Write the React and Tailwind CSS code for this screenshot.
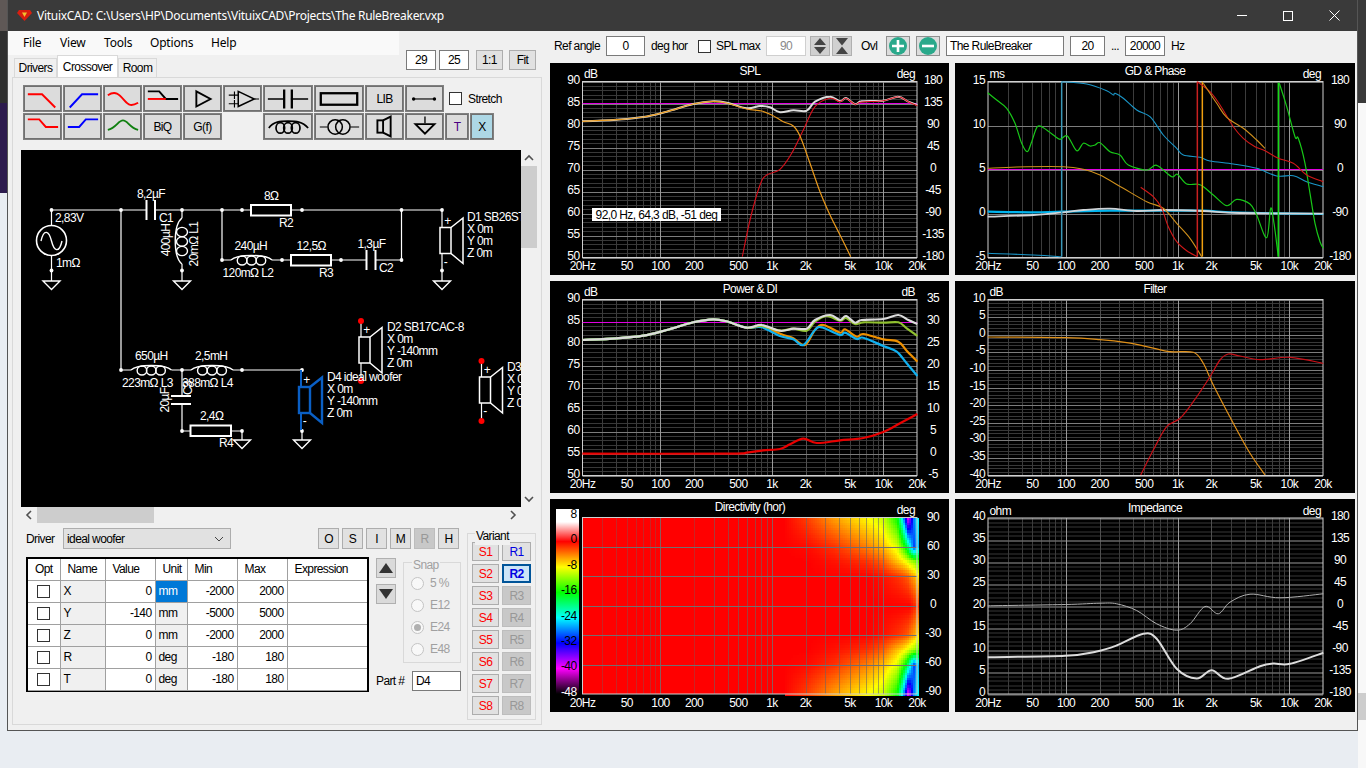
import React, { useMemo } from "react";

const FREQ_LABELS = [
  ["20Hz", 20], ["50", 50], ["100", 100], ["200", 200], ["500", 500],
  ["1k", 1000], ["2k", 2000], ["5k", 5000], ["10k", 10000], ["20k", 20000],
];
const MINOR_FREQS = [
  30, 40, 50, 60, 70, 80, 90, 200, 300, 400, 500, 600, 700, 800, 900,
  2000, 3000, 4000, 5000, 6000, 7000, 8000, 9000,
];
const MAJOR_FREQS = [100, 1000, 10000];

// zoom-space points -> smooth path (catmull-rom)
const toPath = (pts, dx, dy) => {
  const p = pts.map(([x, y]) => [x / 3 + dx, y / 3 + dy]);
  let d = `M${p[0][0].toFixed(1)} ${p[0][1].toFixed(1)}`;
  for (let i = 0; i < p.length - 1; i++) {
    const a = p[i - 1] || p[i];
    const b = p[i];
    const c = p[i + 1];
    const e = p[i + 2] || c;
    const c1x = b[0] + (c[0] - a[0]) / 6;
    const c1y = b[1] + (c[1] - a[1]) / 6;
    const c2x = c[0] - (e[0] - b[0]) / 6;
    const c2y = c[1] - (e[1] - b[1]) / 6;
    d += `C${c1x.toFixed(1)} ${c1y.toFixed(1)} ${c2x.toFixed(1)} ${c2y.toFixed(1)} ${c[0].toFixed(1)} ${c[1].toFixed(1)}`;
  }
  return d;
};

const range = (from, step, n) => Array.from({ length: n }, (_, i) => from + i * step);

const ChartAxes = ({ x0, x1, y0, y1, title, leftUnit, rightUnit, left, right, rightX, xLabelY }) => {
  const fx = (f) => x0 + ((x1 - x0) * Math.log10(f / 20)) / 3;
  return (
    <g fill="#fff" fontSize="12">
      <text x="200" y="8" textAnchor="middle" dominantBaseline="central">{title}</text>
      {leftUnit && <text x={x0 + 1.5} y="11" dominantBaseline="central">{leftUnit}</text>}
      {rightUnit && <text x={x1 - 2} y="11" textAnchor="end" dominantBaseline="central">{rightUnit}</text>}
      {left.map((v, i) => (
        <text key={v} x={x0 - 3} y={y0 + (i * (y1 - y0)) / (left.length - 1) - 2} textAnchor="end" dominantBaseline="central">{v}</text>
      ))}
      {right.map((v, i) => (
        <text key={v} x={rightX} y={y0 + (i * (y1 - y0)) / (right.length - 1) - 2} textAnchor="middle" dominantBaseline="central">{v}</text>
      ))}
      {FREQ_LABELS.map(([label, f]) => (
        <text key={label} x={fx(f)} y={xLabelY} textAnchor="middle" dominantBaseline="central">{label}</text>
      ))}
    </g>
  );
};

const Chart = ({ col, row, title, leftUnit, rightUnit, left, right = [], minor = 5, curves, children }) => {
  const x0 = col === 0 ? 32.5 : 33;
  const x1 = col === 0 ? 367 : 368;
  const y0 = 18.5;
  const y1 = 194.5;
  const dx = col === 0 ? 0 : -5;
  const dy = [-3, -1, -4][row];
  const fx = (f) => x0 + ((x1 - x0) * Math.log10(f / 20)) / 3;
  const divs = (left.length - 1) * minor;
  return (
    <div className="relative bg-black">
      <svg className="block h-full w-full" viewBox={`0 0 ${col === 0 ? 399 : 400} 212`}>
        {minor > 0 && range(1, 1, divs - 1).map((i) => {
          const y = Math.round(y0 + (i * (y1 - y0)) / divs) + 0.5;
          return <line key={i} x1={x0} x2={x1} y1={y} y2={y} stroke="#383838" />;
        })}
        {MINOR_FREQS.concat(MINOR_FREQS.map((f) => f * 10)).filter((f) => f < 20000).map((f, i) => (
          <line key={i} x1={Math.round(fx(f)) + 0.5} x2={Math.round(fx(f)) + 0.5} y1={y0} y2={y1} stroke={f === 200 || f === 2000 ? "#505050" : "#3c3c3c"} />
        ))}
        {left.map((v, i) => {
          const y = Math.round(y0 + (i * (y1 - y0)) / (left.length - 1)) + 0.5;
          return <line key={v} x1={x0} x2={x1} y1={y} y2={y} stroke="#7c7c7c" />;
        })}
        {MAJOR_FREQS.map((f) => (
          <line key={f} x1={Math.round(fx(f)) + 0.5} x2={Math.round(fx(f)) + 0.5} y1={y0} y2={y1} stroke="#999" />
        ))}
        <rect x={x0} y={y0} width={x1 - x0} height={y1 - y0} fill="none" stroke="#d0d0d0" />
        {curves.map((c, i) => {
          if (c.h) {
            const y = Math.round(c.h / 3 + dy) + 0.5;
            return <line key={i} x1={x0} x2={x1} y1={y} y2={y} stroke={c.color} />;
          }
          if (c.line) {
            return <line key={i} x1={c.line[0] / 3 + dx} x2={c.line[0] / 3 + dx} y1={c.line[1] / 3 + dy} y2={c.line[2] / 3 + dy} stroke={c.color} strokeWidth={c.w} />;
          }
          return <path key={i} d={toPath(c.pts, dx, dy)} fill="none" stroke={c.color} strokeWidth={c.w} strokeLinejoin="round" />;
        })}
        <ChartAxes x0={x0} x1={x1} y0={y0} y1={y1} title={title} leftUnit={leftUnit} rightUnit={rightUnit} left={left} right={right} rightX={col === 0 ? 383 : 385} xLabelY="203" />
      </svg>
      {children}
    </div>
  );
};

// colour scale of the directivity map
const SCALE = [
  [8, [255, 255, 255]], [0, [255, 0, 0]], [-8, [255, 255, 0]], [-16, [0, 255, 0]],
  [-24, [0, 255, 255]], [-32, [0, 0, 255]], [-40, [255, 0, 255]], [-48, [0, 0, 0]],
];
const dbColor = (db) => {
  for (let i = 0; i < SCALE.length - 1; i++) {
    const [a, ca] = SCALE[i];
    const [b, cb] = SCALE[i + 1];
    if (db <= a && db >= b) {
      const t = (a - db) / (a - b);
      return `rgb(${ca.map((v, k) => Math.round(v + (cb[k] - v) * t)).join(",")})`;
    }
  }
  return "#000";
};
const HEAT_X = [97, 700, 770, 850, 950, 1000, 1040, 1055, 1065, 1073, 1080, 1090, 1102];
const HEAT_T = [0, 0.33, 0.5, 0.667, 1];
const HEAT = [
  [0, 0, 0, 0, 0, 0, 0, 0, 0, 0, 0, 1, 2],
  [0, 0, 0, 0, 0, 0.5, 1.5, 2, 2.5, 3, 4, 5, 7],
  [0, 0, 0, 0.5, 1.5, 3, 6, 7, 8, 9, 10, 11, 13],
  [0, 0, 0.3, 1.5, 4, 6, 9, 13, 16, 20, 24, 30, 26],
  [0, 0, 2, 5, 8, 10, 16, 24, 32, 40, 36, 28, 24],
];
const lerpIndex = (arr, v) => {
  let i = 0;
  while (i < arr.length - 2 && v > arr[i + 1]) i++;
  return [i, Math.min(1, (v - arr[i]) / (arr[i + 1] - arr[i]))];
};
const heatDb = (zx, t) => {
  const [ix, fx] = lerpIndex(HEAT_X, zx);
  const [it, ft] = lerpIndex(HEAT_T, t);
  const a = HEAT[it][ix] + (HEAT[it][ix + 1] - HEAT[it][ix]) * fx;
  const b = HEAT[it + 1][ix] + (HEAT[it + 1][ix + 1] - HEAT[it + 1][ix]) * fx;
  return -(a + (b - a) * ft);
};

const Directivity = () => {
  const x0 = 32.5;
  const x1 = 367;
  const y0 = 18.5;
  const y1 = 195;
  const fx = (f) => x0 + ((x1 - x0) * Math.log10(f / 20)) / 3;
  const cells = useMemo(() => {
    const out = [];
    for (let x = x0; x < x1; x += 2) {
      const zx = (x + 1) * 3;
      const flat = zx < 640;
      for (let y = y0; y < y1; y += 2.5) {
        if (flat) continue;
        const t = Math.abs((y + 1.25 - (y0 + y1) / 2) / ((y1 - y0) / 2));
        const db = heatDb(zx, t);
        if (db < -0.05) out.push({ x, y, c: dbColor(db) });
      }
    }
    return out;
  }, []);
  const labels = [[8, 57], [0, 133], [-8, 210], [-16, 285], [-24, 362], [-32, 437], [-40, 513], [-48, 590]];
  return (
    <div className="bg-black">
      <svg className="block h-full w-full" viewBox="0 0 399 213">
        <defs>
          <linearGradient id="dbBar" x1="0" x2="0" y1="10" y2="195" gradientUnits="userSpaceOnUse">
            <stop offset="0.07" stopColor="#fff" />
            <stop offset="0.176" stopColor="#f00" />
            <stop offset="0.314" stopColor="#ff0" />
            <stop offset="0.451" stopColor="#0f0" />
            <stop offset="0.588" stopColor="#0ff" />
            <stop offset="0.725" stopColor="#00f" />
            <stop offset="0.862" stopColor="#f0f" />
            <stop offset="1" stopColor="#000" />
          </linearGradient>
        </defs>
        <rect x="6" y="10" width="23" height="185" fill="url(#dbBar)" />
        {labels.map(([v, y]) => (
          <text key={v} x="26.5" y={y / 3 - 4} textAnchor="end" dominantBaseline="central" fontSize="12" fill={v === -48 ? "#fff" : "#000"}>{v}</text>
        ))}
        <rect x={x0} y={y0} width={x1 - x0} height={y1 - y0} fill="#f00" />
        <g shapeRendering="crispEdges">
          {cells.map((c, i) => (
            <rect key={i} x={c.x} y={c.y} width="2.5" height="3" fill={c.c} />
          ))}
        </g>
        {MINOR_FREQS.concat(MINOR_FREQS.map((f) => f * 10)).filter((f) => f < 20000).map((f, i) => (
          <line key={i} x1={Math.round(fx(f)) + 0.5} x2={Math.round(fx(f)) + 0.5} y1={y0} y2={y1} stroke="#666" strokeOpacity="0.35" />
        ))}
        {MAJOR_FREQS.map((f) => (
          <line key={f} x1={Math.round(fx(f)) + 0.5} x2={Math.round(fx(f)) + 0.5} y1={y0} y2={y1} stroke="#707070" strokeOpacity="0.8" />
        ))}
        {[1, 2, 3, 4, 5].map((i) => {
          const y = Math.round(y0 + (i * (y1 - y0)) / 6) + 0.5;
          return <line key={i} x1={x0} x2={x1} y1={y} y2={y} stroke="#707070" />;
        })}
        <rect x={x0} y={y0} width={x1 - x0} height={y1 - y0} fill="none" stroke="#d0d0d0" />
        <ChartAxes x0={x0} x1={x1} y0={y0 + 1} y1={y1 - 1} title="Directivity (hor)" rightUnit="deg" left={[]} right={[90, 60, 30, 0, -30, -60, -90]} rightX={383} xLabelY="204" />
      </svg>
    </div>
  );
};

/* ---------- curve data, zoom-space points ---------- */
const LOW_SPL = [[97, 184], [200, 179], [280, 171], [350, 155], [430, 132], [490, 124]];
const splCurves = [
  { color: "#e000e0", h: 130 },
  { color: "#dcdcdc", w: 2, pts: [...LOW_SPL, [530, 128], [590, 145], [630, 138], [660, 142], [690, 157], [730, 151], [770, 152], [795, 125], [840, 110], [870, 124], [888, 114], [915, 133], [935, 124], [1000, 122], [1045, 110], [1075, 125], [1102, 135]] },
  { color: "#d8101c", w: 1.1, pts: [[577, 590], [600, 480], [630, 375], [650, 345], [690, 328], [725, 280], [760, 210], [795, 140], [840, 115], [870, 125], [888, 115], [915, 133], [935, 126], [1000, 122], [1045, 110], [1075, 125], [1102, 137]] },
  { color: "#ea9a1c", w: 1.2, pts: [...LOW_SPL, [530, 129], [590, 147], [635, 153], [665, 165], [700, 185], [730, 198], [750, 228], [780, 310], [810, 395], [840, 465], [870, 525], [902, 590]] },
];

const gdCurves = [
  { color: "#e000e0", h: 328 },
  { color: "#00b4ee", w: 2.2, pts: [[113, 455], [250, 457], [340, 455], [480, 452], [640, 452], [760, 452], [870, 458], [1120, 462]] },
  { color: "#d0d4d8", w: 1.8, pts: [[113, 470], [250, 465], [340, 457], [400, 450], [480, 446], [560, 453], [640, 450], [760, 453], [870, 459], [1120, 461]] },
  { color: "#1a96c8", w: 1.1, pts: [[113, 580], [250, 585], [333, 590]] },
  { color: "#3b98b8", w: 1.5, line: [335, 590, 65] },
  { color: "#1a96c8", w: 1.1, pts: [[335, 65], [410, 72], [470, 92], [490, 105], [495, 100], [520, 115], [560, 150], [600, 170], [640, 225], [680, 265], [700, 285], [750, 292], [780, 303], [850, 312], [920, 325], [980, 348], [1030, 347], [1070, 365], [1120, 380]] },
  { color: "#18c818", w: 1.2, pts: [[113, 98], [140, 120], [170, 145], [195, 190], [215, 250], [232, 275], [245, 245], [262, 200], [280, 203], [310, 225], [330, 238], [352, 228], [380, 272], [400, 250], [420, 258], [435, 255], [450, 248], [480, 275], [510, 285], [535, 315], [590, 330], [620, 316], [665, 350], [682, 343], [710, 372], [750, 374], [790, 405], [830, 437], [860, 418], [900, 432], [920, 465], [950, 533], [962, 445], [972, 490], [985, 590]] },
  { color: "#18d818", w: 1.5, line: [985, 590, 68] },
  { color: "#18c818", w: 1.2, pts: [[988, 70], [1010, 140], [1035, 230], [1045, 235], [1065, 310], [1080, 400], [1095, 490], [1110, 545], [1120, 565]] },
  { color: "#d0901c", w: 1.1, pts: [[113, 325], [200, 321], [340, 320], [400, 328], [450, 345], [520, 385], [590, 425], [640, 445], [680, 490], [720, 535], [755, 590]] },
  { color: "#d01818", w: 1.1, pts: [[572, 382], [610, 410], [635, 445], [655, 500], [680, 545], [710, 572], [742, 590]] },
  { color: "#c82020", w: 1.5, line: [742, 590, 65] },
  { color: "#f0a010", w: 1.5, line: [757, 590, 65] },
  { color: "#d01818", w: 1.1, pts: [[742, 65], [780, 95], [810, 135], [850, 200], [880, 235], [915, 260], [945, 272], [985, 295], [1030, 310], [1070, 345], [1120, 365]] },
  { color: "#d0901c", w: 1.1, pts: [[760, 70], [800, 130], [830, 172], [880, 205], [920, 240], [945, 265]] },
];

const LOW_PWR = [[97, 180], [200, 175], [280, 167], [350, 150], [430, 127], [490, 118], [530, 124], [590, 143]];
const powerCurves = [
  { color: "#e000e0", h: 125 },
  { color: "#ee9000", w: 2.2, pts: [...LOW_PWR, [635, 140], [700, 165], [730, 175], [765, 195], [795, 150], [820, 135], [870, 158], [885, 148], [920, 170], [940, 162], [1000, 178], [1045, 185], [1070, 212], [1102, 245]] },
  { color: "#10b0f0", w: 2.2, pts: [...LOW_PWR, [635, 142], [690, 168], [730, 178], [760, 195], [795, 150], [815, 142], [870, 165], [885, 158], [920, 177], [940, 173], [1000, 198], [1040, 215], [1070, 250], [1102, 288]] },
  { color: "#90c030", w: 2.2, pts: [...LOW_PWR, [635, 138], [690, 152], [730, 146], [770, 152], [795, 125], [830, 108], [870, 122], [888, 114], [915, 132], [940, 127], [1000, 128], [1045, 127], [1070, 145], [1102, 168]] },
  { color: "#dcdcdc", w: 2.2, pts: [...LOW_PWR, [635, 135], [690, 152], [730, 146], [770, 146], [795, 120], [840, 105], [870, 120], [888, 108], [915, 128], [935, 120], [1000, 117], [1045, 105], [1075, 120], [1102, 132]] },
  { color: "#e80000", w: 2.2, pts: [[97, 521], [530, 521], [590, 518], [640, 511], [690, 507], [720, 493], [760, 476], [800, 489], [870, 481], [940, 474], [1000, 456], [1050, 430], [1102, 402]] },
];

const filterCurves = [
  { color: "#e09018", w: 1.2, pts: [[113, 171], [346, 173], [450, 179], [530, 188], [600, 202], [660, 215], [730, 217], [760, 250], [790, 315], [850, 430], [900, 520], [945, 585]] },
  { color: "#c81018", w: 1.2, pts: [[572, 585], [610, 510], [650, 440], [690, 415], [730, 365], [780, 290], [810, 240], [835, 222], [870, 228], [930, 239], [1020, 232], [1120, 250]] },
];

const impedanceCurves = [
  { color: "#b0b0b0", w: 1, pts: [[113, 331], [346, 327], [450, 323], [500, 325], [560, 345], [620, 385], [680, 404], [720, 385], [765, 333], [805, 355], [840, 320], [900, 296], [990, 307], [1120, 295]] },
  { color: "#dcdcdc", w: 2, pts: [[113, 485], [346, 481], [440, 468], [500, 450], [580, 415], [620, 430], [680, 520], [740, 549], [785, 524], [835, 550], [930, 512], [970, 504], [1020, 505], [1120, 472]] },
];

/* ---------- schematic ---------- */
const Node = ({ x, y }) => <circle cx={x} cy={y} r="1.9" fill="#fff" />;
const Lbl = ({ x, y, rot, anchor, children }) => (
  <text
    x={x}
    y={y}
    fill="#fff"
    fontSize="12"
    dominantBaseline="central"
    textAnchor={rot ? "middle" : anchor}
    transform={rot ? `rotate(-90 ${x} ${y})` : undefined}
  >
    {children}
  </text>
);
const Wire = ({ d, color = "#fff" }) => <path d={d} fill="none" stroke={color} strokeWidth="1.2" />;
const Ground = ({ x, y }) => (
  <path d={`M${x - 8.5} ${y}H${x + 8.5}L${x} ${y + 8.5}Z`} fill="none" stroke="#fff" strokeWidth="1.4" />
);
const Res = ({ x, y, w }) => <rect x={x} y={y - 5} width={w} height="10.5" fill="none" stroke="#fff" strokeWidth="2" />;
const CoilH = ({ x0, x1, y }) => {
  const w = x1 - x0;
  return (
    <g fill="none" stroke="#fff" strokeWidth="1.4">
      <path d={`M${x0} ${y}C${x0 + 6} ${y - 6} ${x1 - 6} ${y - 6} ${x1} ${y}`} />
      <ellipse cx={x0 + w * 0.27} cy={y + 0.5} rx="4.8" ry="4.5" />
      <ellipse cx={x0 + w * 0.5} cy={y + 0.5} rx="4.8" ry="4.5" />
      <ellipse cx={x0 + w * 0.73} cy={y + 0.5} rx="4.8" ry="4.5" />
    </g>
  );
};
const Speaker = ({ x, y, color = "#fff", sw = 1.5, dots, wireTop, wireBottom }) => (
  <g>
    <path d={`M${x} ${wireTop}V${y}M${x} ${y + 26}V${wireBottom}`} stroke={color} strokeWidth={sw === 1.5 ? 1.2 : 2} fill="none" />
    <rect x={x - 2} y={y} width="11" height="26" fill="none" stroke={color} strokeWidth={sw} />
    <path d={`M${x + 9} ${y}L${x + 21} ${y - 9.5}V${y + 36}L${x + 9} ${y + 26}`} fill="none" stroke={color} strokeWidth={sw} />
    <text x={x + 5.5} y={y - 7} fill="#fff" fontSize="12" textAnchor="middle" dominantBaseline="central">+</text>
    <text x={x + 3.5} y={y + 34} fill="#fff" fontSize="12" textAnchor="middle" dominantBaseline="central">-</text>
    {dots && <circle cx={x} cy={wireTop} r="3" fill="#f00" />}
    {dots && <circle cx={x} cy={wireBottom} r="3" fill="#f00" />}
  </g>
);
const DriverText = ({ x, y, name, ry }) => (
  <g>
    <Lbl x={x} y={y}>{name}</Lbl>
    <Lbl x={x} y={y + 12}>X 0m</Lbl>
    <Lbl x={x} y={y + 24}>{`Y ${ry}`}</Lbl>
    <Lbl x={x} y={y + 36}>Z 0m</Lbl>
  </g>
);

const Schematic = () => (
  <svg className="block h-full w-full" viewBox="21 150 500 357">
    <Wire d="M51.5 210H146.5M155 210H251M291 210H442M51.5 210V281M182 210V218M182 264V281M222 210V260H231M272 260H291M331 260H366.5M375.5 260H401.5V210M121 210V370H131M171.5 370H191M233 370H302M182 370V396M182 404V431H190.5M231 431H242V440M442 270V281M302 430V440" />
    <circle cx="51.5" cy="240.5" r="15" fill="#000" stroke="#fff" strokeWidth="1.6" />
    <path d="M41 241C44 228 49 231 51.5 241S59 254 62 241" fill="none" stroke="#fff" strokeWidth="1.4" />
    {[[51.5, 210], [121, 210], [182, 210], [222, 210], [242, 210], [302, 210], [401.5, 210], [442, 210], [51.5, 270.5], [182, 270.5], [442, 270.5], [222, 260], [282, 260], [341, 260], [401.5, 260], [121, 370], [182, 370], [242, 370], [302, 370], [182, 431], [242, 431], [302, 431]].map(([x, y], i) => (
      <Node key={i} x={x} y={y} />
    ))}
    {[[51.5, 281], [182, 281], [442, 281], [242, 440], [302, 440]].map(([x, y], i) => (
      <Ground key={i} x={x} y={y} />
    ))}
    <path d="M146.5 200V220M155 200V220M366.5 250V270M375.5 250V270M171 396H191M171 404H191" stroke="#fff" strokeWidth="2" fill="none" />
    <Res x={251} y={210} w={40} />
    <Res x={291} y={260} w={40} />
    <Res x={190.5} y={430.5} w={40.5} />
    <CoilH x0={231} x1={272} y={260} />
    <CoilH x0={131} x1={171.5} y={370} />
    <CoilH x0={191} x1={233} y={370} />
    <g fill="none" stroke="#fff" strokeWidth="1.4">
      <path d="M182 218C173 225 173 257 182 264" />
      <ellipse cx="182" cy="232" rx="5.5" ry="4.6" />
      <ellipse cx="182" cy="241.5" rx="5.5" ry="4.6" />
      <ellipse cx="182" cy="251" rx="5.5" ry="4.6" />
    </g>
    <Lbl x={55} y={218}>2,83V</Lbl>
    <Lbl x={56} y={263}>1mΩ</Lbl>
    <Lbl x={137} y={194}>8,2µF</Lbl>
    <Lbl x={159} y={218}>C1</Lbl>
    <Lbl x={166} y={240} rot>400µH</Lbl>
    <Lbl x={193.5} y={244} rot>20mΩ L1</Lbl>
    <Lbl x={264} y={196}>8Ω</Lbl>
    <Lbl x={279} y={223}>R2</Lbl>
    <Lbl x={234.5} y={246}>240µH</Lbl>
    <Lbl x={222.5} y={273}>120mΩ L2</Lbl>
    <Lbl x={296.5} y={246}>12,5Ω</Lbl>
    <Lbl x={319} y={273}>R3</Lbl>
    <Lbl x={357.5} y={244}>1,3µF</Lbl>
    <Lbl x={379} y={268}>C2</Lbl>
    <Lbl x={135} y={356}>650µH</Lbl>
    <Lbl x={195} y={356}>2,5mH</Lbl>
    <Lbl x={122} y={383}>223mΩ L3</Lbl>
    <Lbl x={182} y={383}>388mΩ L4</Lbl>
    <Lbl x={187.6} y={388} rot>C3</Lbl>
    <Lbl x={164.6} y={400} rot>20µF</Lbl>
    <Lbl x={200} y={416}>2,4Ω</Lbl>
    <Lbl x={219} y={443}>R4</Lbl>
    <Speaker x={442} y={227.5} wireTop={210} wireBottom={270} />
    <Speaker x={361} y={337} dots wireTop={321} wireBottom={381} />
    <Speaker x={481.5} y={377} dots wireTop={361} wireBottom={421} />
    <Speaker x={301} y={387} color="#0a5fc4" sw={2.4} wireTop={370} wireBottom={430} />
    <DriverText x={467} y={217} name="D1 SB26ST" ry="0m" />
    <DriverText x={387} y={327} name="D2 SB17CAC-8" ry="-140mm" />
    <DriverText x={507} y={367} name="D3 SB26ST" ry="0m" />
    <DriverText x={327} y={377} name="D4 ideal woofer" ry="-140mm" />
  </svg>
);

/* ---------- toolbar ---------- */
const ToolBtn = ({ w = "w-[37px]", className = "bg-[#dcdcdc]", children }) => (
  <div className={`${w} ${className} flex h-[25px] shrink-0 items-center justify-center border border-[#707070] outline outline-[0.5px] outline-[#808080]`}>
    {children}
  </div>
);
const Ico = ({ w = 37, children }) => (
  <svg width={w} height="25" viewBox={`0 0 ${w} 25`} fill="none" strokeWidth="2">{children}</svg>
);

const Toolbar = () => (
  <div className="ml-[11px] flex flex-col gap-[3px]">
    <div className="flex items-center gap-[3px]">
      <ToolBtn><Ico><path d="M3 8H18L32 22" stroke="#f00" /></Ico></ToolBtn>
      <ToolBtn><Ico><path d="M5 22L18 8H35" stroke="#00f" /></Ico></ToolBtn>
      <ToolBtn><Ico><path d="M3 9C11 4 15 8 20 14S28 21 35 17" stroke="#f00" /></Ico></ToolBtn>
      <ToolBtn><Ico><path d="M3 5H15L22 13H35" stroke="#000" /><path d="M3 13H22" stroke="#f00" /></Ico></ToolBtn>
      <ToolBtn><Ico><path d="M12 5L27 13L12 21Z" stroke="#000" /></Ico></ToolBtn>
      <ToolBtn><Ico><path d="M14 5L31 13L14 21Z" stroke="#000" strokeWidth="1.6" /><path d="M4 9H14M4 18H14M10 5V13M10 14V22M31 13H36" stroke="#000" strokeWidth="1.2" /></Ico></ToolBtn>
      <ToolBtn w="w-[48px]"><Ico w={48}><path d="M3 13H19M27 13H45" stroke="#000" strokeWidth="1.4" /><path d="M20 3V23M28 3V23" stroke="#000" strokeWidth="2.4" /></Ico></ToolBtn>
      <ToolBtn w="w-[48px]"><Ico w={48}><rect x="5" y="7" width="38" height="12" stroke="#000" strokeWidth="2.4" /></Ico></ToolBtn>
      <ToolBtn>LIB</ToolBtn>
      <ToolBtn><Ico><path d="M7 13H29" stroke="#000" strokeWidth="1.2" /><circle cx="7" cy="13" r="1.8" fill="#000" stroke="none" /><circle cx="29" cy="13" r="1.8" fill="#000" stroke="none" /></Ico></ToolBtn>
      <div className="ml-[3px] h-[13px] w-[13px] border border-[#333] bg-white" />
      <span className="ml-[3px]">Stretch</span>
    </div>
    <div className="flex items-center gap-[3px]">
      <ToolBtn><Ico><path d="M3 5H15L22 13H35" stroke="#f00" /></Ico></ToolBtn>
      <ToolBtn><Ico><path d="M3 13H15L22 5H35" stroke="#00f" /></Ico></ToolBtn>
      <ToolBtn><Ico><path d="M3 16C12 14 14 6 19 6S26 14 35 16" stroke="#108010" /></Ico></ToolBtn>
      <ToolBtn>BiQ</ToolBtn>
      <ToolBtn>G(f)</ToolBtn>
      <div className="w-[37px]" />
      <ToolBtn w="w-[48px]"><Ico w={48}><path d="M4 14C9 7 16 7 24 7S39 7 45 14" stroke="#000" strokeWidth="1.8" /><ellipse cx="16" cy="14" rx="4.5" ry="5.5" stroke="#000" strokeWidth="1.8" /><ellipse cx="24" cy="14" rx="4.5" ry="5.5" stroke="#000" strokeWidth="1.8" /><ellipse cx="32" cy="14" rx="4.5" ry="5.5" stroke="#000" strokeWidth="1.8" /></Ico></ToolBtn>
      <ToolBtn w="w-[48px]"><Ico w={48}><path d="M4 13H12M36 13H45" stroke="#000" strokeWidth="1.2" /><circle cx="20" cy="13" r="7.5" stroke="#000" strokeWidth="1.6" /><circle cx="28" cy="13" r="7.5" stroke="#000" strokeWidth="1.6" /></Ico></ToolBtn>
      <ToolBtn><Ico><rect x="11" y="6" width="6" height="13" stroke="#000" strokeWidth="2" /><path d="M17 6L25 2V23L17 19" stroke="#000" strokeWidth="2" /></Ico></ToolBtn>
      <ToolBtn><Ico><path d="M19 2V9" stroke="#000" strokeWidth="1.4" /><path d="M9 10H29L19 20Z" stroke="#000" strokeWidth="2" /></Ico></ToolBtn>
      <ToolBtn w="w-[22px] text-[#4b0082]">T</ToolBtn>
      <ToolBtn w="w-[22px]" className="bg-[#add8e6]">X</ToolBtn>
    </div>
  </div>
);

const ScrollArrow = ({ d }) => (
  <svg width="16" height="16" viewBox="0 0 16 16" fill="none" stroke="#505050" strokeWidth="1.6"><path d={d} /></svg>
);

/* ---------- driver params ---------- */
const PARAMS = [
  ["X", "0", "mm", "-2000", "2000"],
  ["Y", "-140", "mm", "-5000", "5000"],
  ["Z", "0", "mm", "-2000", "2000"],
  ["R", "0", "deg", "-180", "180"],
  ["T", "0", "deg", "-180", "180"],
];
const th = "h-[21px] border-r border-b border-[#a0a0a0] px-[7px] text-left font-normal";
const td = "h-[22px] border-r border-b border-[#a0a0a0] px-[3px]";

const ParamTable = () => (
  <div className="h-[135px] w-[343px] shrink-0 border-2 border-black bg-white">
    <table className="w-[339px] table-fixed border-collapse">
      <colgroup>
        <col className="w-[32px]" />
        <col className="w-[45px]" />
        <col className="w-[50px]" />
        <col className="w-[32px]" />
        <col className="w-[50px]" />
        <col className="w-[50px]" />
        <col className="w-[80px]" />
      </colgroup>
      <thead>
        <tr>
          <th className={`${th} text-center`}>Opt</th>
          <th className={`${th} text-center`}>Name</th>
          <th className={th}>Value</th>
          <th className={`${th} text-center`}>Unit</th>
          <th className={th}>Min</th>
          <th className={th}>Max</th>
          <th className={`${th} border-r-0`}>Expression</th>
        </tr>
      </thead>
      <tbody>
        {PARAMS.map(([name, value, unit, min, max], i) => (
          <tr key={name}>
            <td className={td}>
              <div className="mx-auto h-[13px] w-[13px] border border-[#333] bg-white" />
            </td>
            <td className={`${td} bg-[#f0f0f0]`}>{name}</td>
            <td className={`${td} text-right`}>{value}</td>
            <td className={`${td} ${i === 0 ? "bg-[#0078d7] text-white" : "bg-[#f0f0f0]"}`}>{unit}</td>
            <td className={`${td} text-right`}>{min}</td>
            <td className={`${td} text-right`}>{max}</td>
            <td className={`${td} border-r-0`} />
          </tr>
        ))}
      </tbody>
    </table>
  </div>
);

const SmallBtn = ({ children, disabled }) => (
  <div className={`flex h-[21px] w-[21px] items-center justify-center border ${disabled ? "border-[#bdbdbd] bg-[#c8c8c8] text-[#989898]" : "border-[#adadad] bg-[#e1e1e1]"}`}>
    {children}
  </div>
);

const ArrowBtn = ({ up }) => (
  <div className="flex h-[20px] w-[20px] items-center justify-center border border-[#b0b0b0] bg-[#dadada]">
    <svg width="14" height="12" viewBox="0 0 14 12" fill="#333"><path d={up ? "M7 1L14 11H0Z" : "M7 11L14 1H0Z"} /></svg>
  </div>
);

const SnapRadio = ({ label, checked }) => (
  <div className="flex h-[22px] items-center text-[#a0a0a0]">
    <div className="flex h-[13px] w-[13px] items-center justify-center rounded-full border border-[#c4c4c4] bg-[#f8f8f8]">
      {checked && <div className="h-[7px] w-[7px] rounded-full bg-[#b0b0b0]" />}
    </div>
    <span className="ml-[6px]">{label}</span>
  </div>
);

const VariantBtn = ({ s, r, state }) => (
  <div className="flex gap-[3px]">
    <div className="flex h-[19px] w-[27px] items-center justify-center border border-[#adadad] bg-[#e1e1e1] text-[#f00]">{s}</div>
    {state === "active" && <div className="flex h-[19px] w-[29px] items-center justify-center border border-[#adadad] bg-[#e1e1e1] text-[#0000e0]">{r}</div>}
    {state === "selected" && <div className="flex h-[19px] w-[29px] items-center justify-center border-2 border-[#005499] bg-[#cce4f7] font-bold text-[#0000e0]">{r}</div>}
    {state === "off" && <div className="flex h-[19px] w-[29px] items-center justify-center border border-[#bdbdbd] bg-[#c8c8c8] text-[#989898]">{r}</div>}
  </div>
);

const Box = ({ className = "", children }) => (
  <div className={`flex h-[20px] shrink-0 items-center justify-center border border-[#7a7a7a] bg-white ${className}`}>{children}</div>
);

const LeftColumn = () => (
  <div className="flex w-[542px] shrink-0 flex-col">
    <div className="flex h-[46px]">
      <div className="w-[391px]">
        <div className="flex h-[24px] items-center bg-[#f9f9f9] font-['Noto_Sans','Open_Sans',sans-serif] text-[12px] tracking-[-0.2px]">
          <span className="ml-[15px] w-[37px]">File</span>
          <span className="w-[44px]">View</span>
          <span className="w-[46px]">Tools</span>
          <span className="w-[61px]">Options</span>
          <span>Help</span>
        </div>
        <div className="flex h-[22px] items-end pl-[6px]">
          <div className="flex h-[19px] w-[43px] items-center justify-center border border-b-0 border-[#d9d9d9] bg-[#f0f0f0]">Drivers</div>
          <div className="z-10 flex h-[22px] w-[61px] items-center justify-center border border-b-0 border-[#d9d9d9] bg-white">Crossover</div>
          <div className="flex h-[19px] w-[39px] items-center justify-center border border-b-0 border-[#d9d9d9] bg-[#f0f0f0]">Room</div>
        </div>
      </div>
      <div className="flex pt-[19px] pl-[7px]">
        <Box className="w-[30px]">29</Box>
        <Box className="ml-[3px] w-[30px]">25</Box>
        <div className="ml-[7px] flex h-[20px] w-[27px] items-center justify-center border border-[#adadad] bg-[#e1e1e1]">1:1</div>
        <div className="ml-[6px] flex h-[20px] w-[27px] items-center justify-center border border-[#adadad] bg-[#e1e1e1]">Fit</div>
      </div>
    </div>

    <div className="ml-[4px] flex h-[648px] w-[530px] flex-col border border-[#d9d9d9] bg-[#f0f0f0] pt-[8px]">
      <Toolbar />
      <div className="mt-[11px] ml-[8px] flex h-[357px]">
        <div className="h-[357px] w-[500px] shrink-0 bg-black">
          <Schematic />
        </div>
        <div className="flex w-[16px] flex-col bg-[#f0f0f0]">
          <ScrollArrow d="M4 10L8 6L12 10" />
          <div className="h-[82px] bg-[#cdcdcd]" />
          <div className="flex-1" />
          <ScrollArrow d="M4 6L8 10L12 6" />
        </div>
      </div>
      <div className="ml-[8px] flex h-[16px] w-[500px] items-center">
        <ScrollArrow d="M10 4L6 8L10 12" />
        <div className="h-[16px] w-[117px] bg-[#cdcdcd]" />
        <div className="flex-1" />
        <ScrollArrow d="M6 4L10 8L6 12" />
      </div>

      <div className="mt-[5px] flex">
        <div className="ml-[13px] w-[435px]">
          <div className="flex h-[21px] items-center">
            <span className="w-[37px]">Driver</span>
            <div className="flex h-[21px] w-[168px] items-center justify-between border border-[#adadad] bg-[#e1e1e1] pr-[5px] pl-[3px]">
              <span>ideal woofer</span>
              <svg width="12" height="12" viewBox="0 0 12 12" fill="none" stroke="#444" strokeWidth="1"><path d="M2 4L6 8L10 4" /></svg>
            </div>
            <div className="ml-[87px] flex gap-[3px]">
              <SmallBtn>O</SmallBtn>
              <SmallBtn>S</SmallBtn>
              <SmallBtn>I</SmallBtn>
              <SmallBtn>M</SmallBtn>
              <SmallBtn disabled>R</SmallBtn>
              <SmallBtn>H</SmallBtn>
            </div>
          </div>
          <div className="mt-[8px] flex">
            <ParamTable />
            <div className="ml-[7px] w-[85px]">
              <div className="flex">
                <div className="flex flex-col gap-[6px] pt-[1px]">
                  <ArrowBtn up />
                  <ArrowBtn />
                </div>
                <div className="relative mt-[5px] ml-[7px] h-[101px] w-[58px] border border-[#d9d9d9] pt-[9px] pl-[7px]">
                  <span className="absolute -top-[7px] left-[8px] bg-[#f0f0f0] px-[1px] text-[#a0a0a0]">Snap</span>
                  <SnapRadio label="5 %" />
                  <SnapRadio label="E12" />
                  <SnapRadio label="E24" checked />
                  <SnapRadio label="E48" />
                </div>
              </div>
              <div className="mt-[8px] flex items-center">
                <span className="w-[36px]">Part #</span>
                <Box className="w-[49px] justify-start pl-[3px]">D4</Box>
              </div>
            </div>
          </div>
        </div>
        <div className="relative mt-[5px] ml-[6px] flex h-[187px] w-[69px] flex-col gap-[3px] border border-[#d9d9d9] pt-[8px] pl-[4px]">
          <span className="absolute -top-[7px] left-[7px] bg-[#f0f0f0] px-[1px]">Variant</span>
          <VariantBtn s="S1" r="R1" state="active" />
          <VariantBtn s="S2" r="R2" state="selected" />
          <VariantBtn s="S3" r="R3" state="off" />
          <VariantBtn s="S4" r="R4" state="off" />
          <VariantBtn s="S5" r="R5" state="off" />
          <VariantBtn s="S6" r="R6" state="off" />
          <VariantBtn s="S7" r="R7" state="off" />
          <VariantBtn s="S8" r="R8" state="off" />
        </div>
      </div>
    </div>
  </div>
);

const GreenBtn = ({ plus }) => (
  <div className="flex h-[20px] w-[24px] items-center justify-center border border-[#909090] bg-[#dcdcdc]">
    <svg width="18" height="18" viewBox="0 0 18 18">
      <circle cx="9" cy="9" r="9" fill="#2aa98b" />
      <path d={plus ? "M3 9H15M9 3V15" : "M3 9H15"} stroke="#fff" strokeWidth="2.6" />
    </svg>
  </div>
);

const TopBar = () => (
  <div className="flex h-[32px] items-center pb-[2px] pl-[4px]">
    <span className="w-[52px] shrink-0">Ref angle</span>
    <Box className="w-[39px]">0</Box>
    <span className="ml-[6px] w-[47px] shrink-0">deg hor</span>
    <div className="h-[13px] w-[13px] shrink-0 border border-[#333] bg-white" />
    <span className="ml-[5px] w-[50px] shrink-0">SPL max</span>
    <Box className="w-[40px] border-[#cfcfcf] bg-[#f0f0f0] text-[#8a8a8a]">90</Box>
    <div className="ml-[4px] h-[20px] w-[20px] shrink-0 border border-[#b0b0b0] bg-[#d0d0d0]">
      <svg width="18" height="18" viewBox="0 0 18 18" fill="#444"><path d="M9 1L15 8H3Z" /><path d="M9 17L15 10H3Z" /></svg>
    </div>
    <div className="ml-[2px] h-[20px] w-[20px] shrink-0 border border-[#b0b0b0] bg-[#d0d0d0]">
      <svg width="18" height="18" viewBox="0 0 18 18" fill="#444"><path d="M9 8.5L15 1H3Z" /><path d="M9 9.5L15 17H3Z" /></svg>
    </div>
    <span className="ml-[9px] w-[25px] shrink-0">Ovl</span>
    <GreenBtn plus />
    <div className="ml-[6px]"><GreenBtn /></div>
    <Box className="ml-[6px] w-[118px] justify-start pl-[3px]">The RuleBreaker</Box>
    <Box className="ml-[6px] w-[35px]">20</Box>
    <span className="w-[20px] shrink-0 text-center">...</span>
    <Box className="w-[40px]">20000</Box>
    <span className="ml-[6px]">Hz</span>
  </div>
);

const TitleBar = () => (
  <div className="flex h-[31px] shrink-0 items-center bg-[#3a3a3a] text-white">
    <svg className="ml-[9px]" width="15" height="11" viewBox="0 0 15 11">
      <path d="M2 0H13L15 3L7.5 11L0 3Z" fill="#d81e10" />
      <path d="M5 2.5H10L7.5 7Z" fill="#f2c230" />
    </svg>
    <span className="ml-[5px] font-['Noto_Sans','Open_Sans',sans-serif] text-[12px] tracking-[-0.28px]">
      VituixCAD: C:\Users\HP\Documents\VituixCAD\Projects\The RuleBreaker.vxp
    </span>
    <div className="ml-auto flex">
      <div className="flex h-[31px] w-[46px] items-center justify-center">
        <div className="h-px w-[10px] bg-white" />
      </div>
      <div className="flex h-[31px] w-[46px] items-center justify-center">
        <div className="h-[10px] w-[10px] border border-white" />
      </div>
      <div className="flex h-[31px] w-[46px] items-center justify-center">
        <svg width="11" height="11" viewBox="0 0 11 11" stroke="#fff" strokeWidth="1"><path d="M0.5 0.5L10.5 10.5M10.5 0.5L0.5 10.5" /></svg>
      </div>
    </div>
  </div>
);

export default function App() {
  return (
    <div className="flex h-[768px] w-[1366px] overflow-hidden bg-[#e9edf2] font-['Liberation_Sans',Arial,sans-serif] text-[12px] tracking-[-0.6px] text-black">
      <div className="flex w-[7px] shrink-0 flex-col">
        <div className="h-[31px] bg-[#5f5856]" />
        <div className="h-[72px] bg-[#2f2f2f]" />
        <div className="h-[90px] bg-[#2d1b4e]" />
      </div>
      <div className="flex h-[731px] w-[1351px] shrink-0 flex-col border-x border-b border-[#555] bg-[#f0f0f0]">
        <TitleBar />
        <div className="flex">
          <LeftColumn />
          <div className="flex flex-col">
            <TopBar />
            <div className="grid grid-cols-[399px_400px] grid-rows-[212px_212px_213px] gap-[6px]">
              <Chart col={0} row={0} title="SPL" leftUnit="dB" rightUnit="deg" left={range(90, -5, 9)} right={range(180, -45, 9)} curves={splCurves}>
                <div className="absolute top-[145px] left-[42px] flex h-[13px] w-[129px] items-center justify-center bg-white">92,0 Hz, 64,3 dB, -51 deg</div>
              </Chart>
              <Chart col={1} row={0} title="GD & Phase" leftUnit="ms" rightUnit="deg" left={range(15, -5, 5)} right={range(180, -90, 5)} minor={0} curves={gdCurves} />
              <Chart col={0} row={1} title="Power & DI" leftUnit="dB" rightUnit="dB" left={range(90, -5, 9)} right={range(35, -5, 9)} curves={powerCurves} />
              <Chart col={1} row={1} title="Filter" leftUnit="dB" left={range(10, -5, 11)} curves={filterCurves} />
              <Directivity />
              <Chart col={1} row={2} title="Impedance" leftUnit="ohm" rightUnit="deg" left={range(40, -5, 9)} right={range(180, -45, 9)} curves={impedanceCurves} />
            </div>
          </div>
        </div>
      </div>
      <div className="flex w-[8px] shrink-0 flex-col">
        <div className="h-[103px] bg-[#3a3a3a]" />
        <div className="h-[590px] bg-[#f8f8f8]" />
        <div className="h-[27px] bg-[#cdcdcd]" />
        <div className="flex-1 bg-[#f8f8f8]" />
      </div>
    </div>
  );
}
